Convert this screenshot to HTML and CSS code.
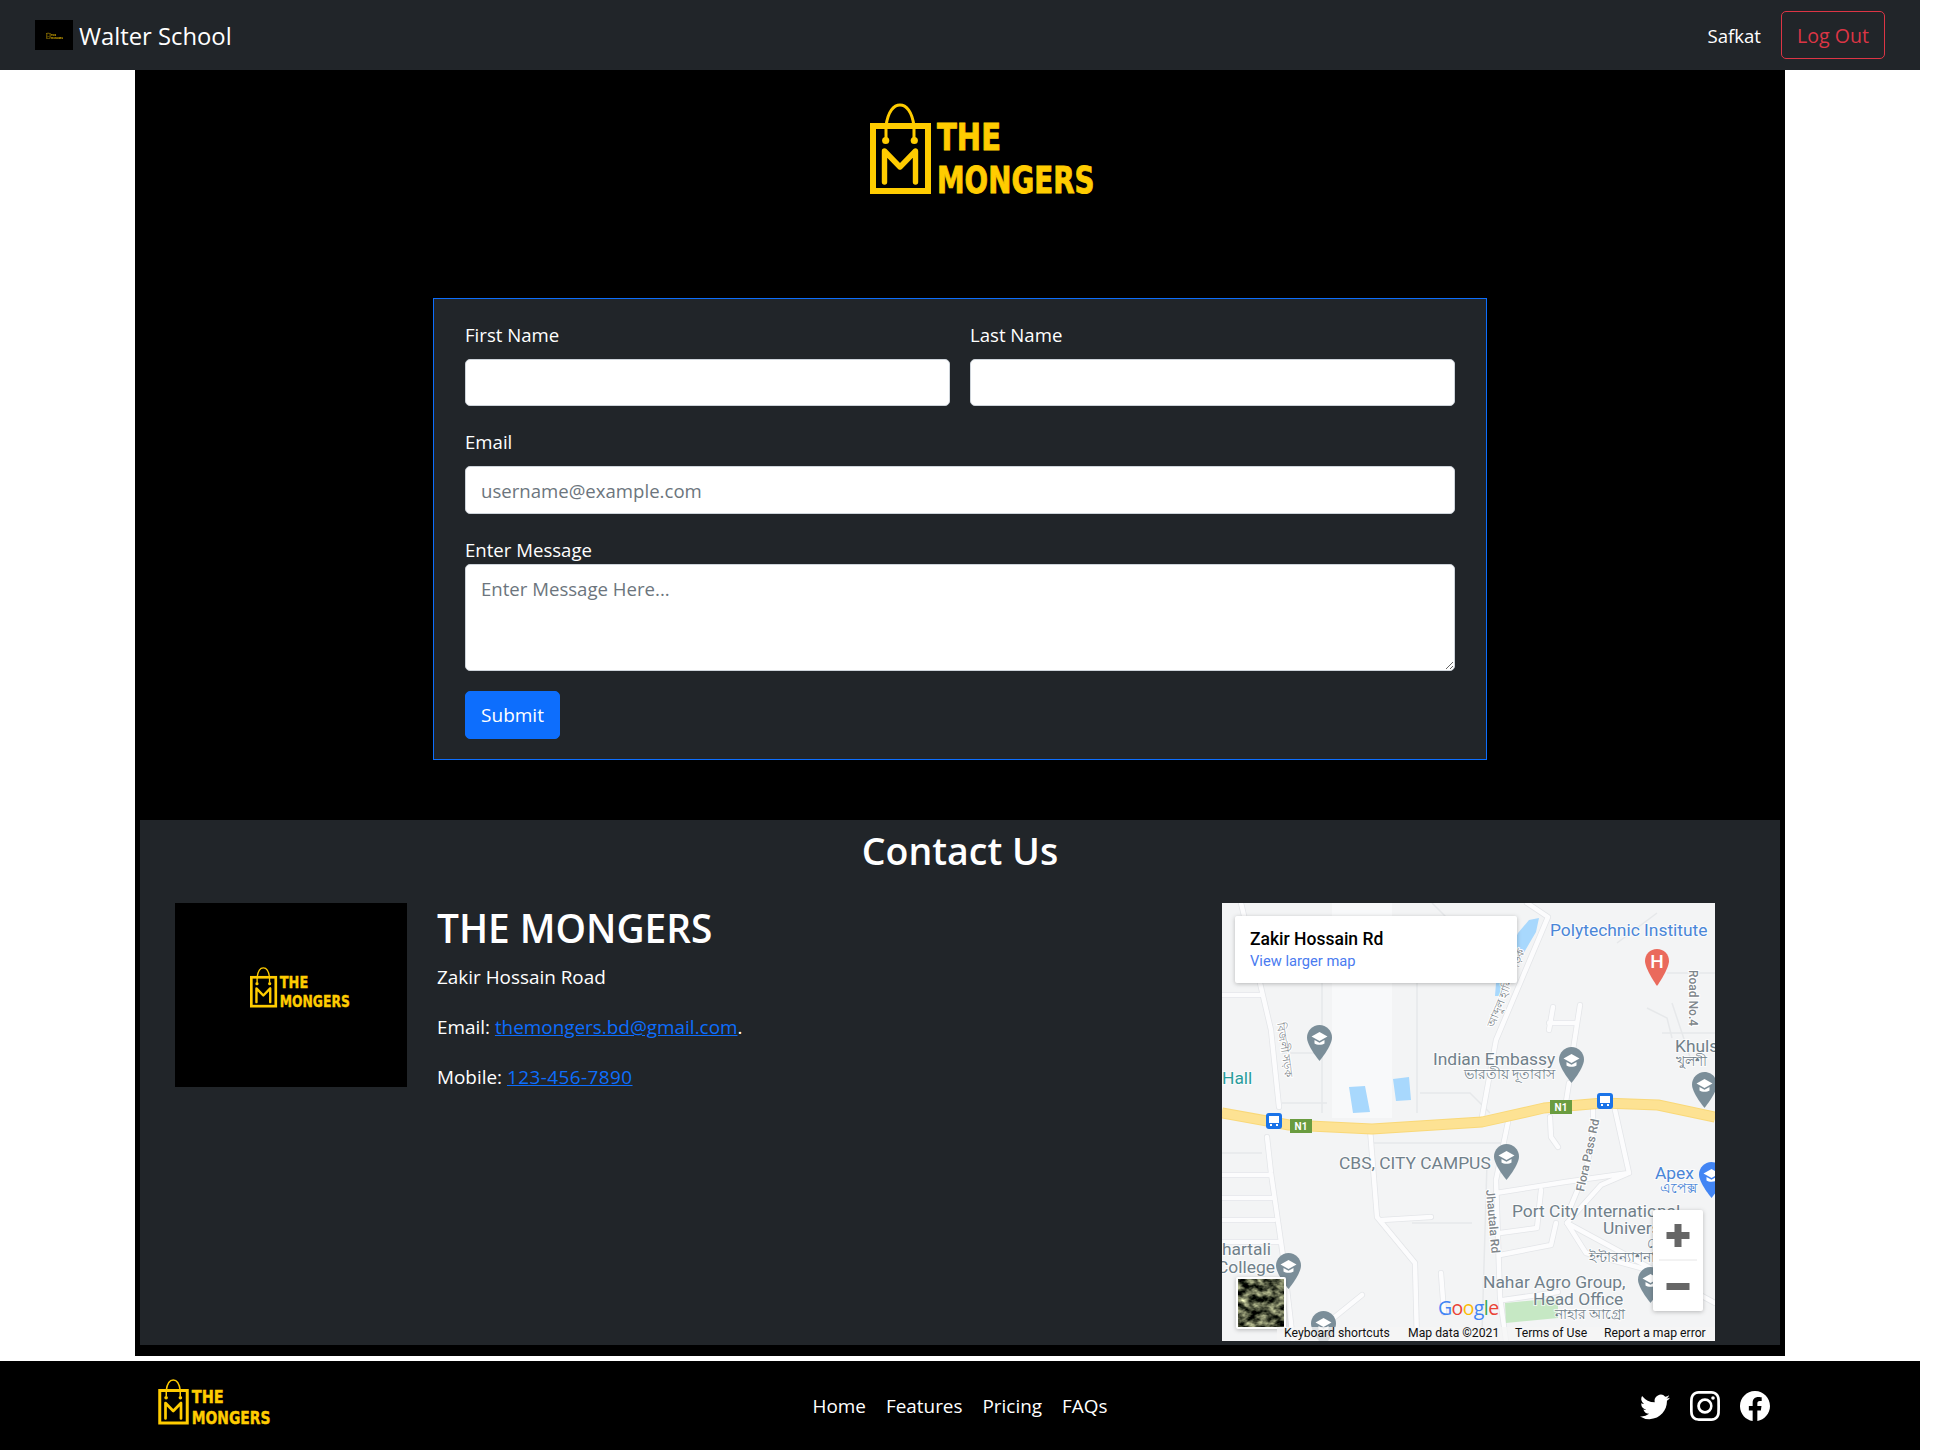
FILE: index.html
```html
<!DOCTYPE html>
<html lang="en">
<head>
<meta charset="utf-8">
<title>Walter School</title>
<link rel="stylesheet" href="styles.css">
</head>
<body>
<svg class="defs" width="0" height="0" aria-hidden="true">
  <defs>
    <filter id="sat" x="0" y="0" width="100%" height="100%" color-interpolation-filters="sRGB">
      <feTurbulence type="fractalNoise" baseFrequency="0.11 0.16" numOctaves="3" seed="7"/>
      <feColorMatrix type="matrix" values="1.5 0 0 0 -.43  1.5 0 0 0 -.41  1.2 0 0 0 -.35  0 0 0 0 1"/>
    </filter>
    <symbol id="logo" viewBox="0 0 225 92">
      <rect class="lg-line" x="3" y="23" width="55" height="65" stroke-width="6"/>
      <path class="lg-line" stroke-width="3" d="M16 23C18 8 24 2 30 2s12 6 14 21M16 23v12M44 23v12"/>
      <circle class="lg-fill" cx="15.7" cy="37.5" r="3.6"/>
      <circle class="lg-fill" cx="44.3" cy="37.5" r="3.6"/>
      <path class="lg-line lg-round" stroke-width="5.4" d="M14.500 79V48L30 64 45.500 48v31"/>
      <text class="lg-text" x="67" y="47" textLength="64" lengthAdjust="spacingAndGlyphs">THE</text>
      <text class="lg-text" x="67" y="90" textLength="157.5" lengthAdjust="spacingAndGlyphs">MONGERS</text>
    </symbol>
    <symbol id="pin" viewBox="0 0 25 36">
      <path d="M12.5 0C5.6 0 0 5.6 0 12.5 0 21 12.5 36 12.5 36S25 21 25 12.5C25 5.6 19.4 0 12.5 0z"/>
      <path class="pin-w" d="M12.5 7 4.5 11.5l8 4.5 8-4.5zM7.5 15v3.500c2 1.700 8 1.700 10 0V15l-5 2.800z"/>
    </symbol>
    <g id="roads">
      <path d="M19 0 38 80 49 127 57 204M45 234 49 270 62 360 71 438"/>
      <path d="M0 272H48M0 295H50M0 317H52M0 339H58M0 92H38"/>
      <path d="M148 226 155 314 193 360 195 438M160 317 209 314"/>
      <path d="M305 0 326 14 274 137 260 214M286 219 274 277 278 394 284 438"/>
      <path d="M274 290 343 279 407 270 393 207M407 270 379 282 345 320 364 350 426 367"/>
      <path d="M278 330 315 325 319 287M278 352 329 342 334 320M281 397 336 389"/>
      <path d="M347 180 343 205M331 104 327 127M358 102 351 147M327 120 353 120M328 214 329 234 336 244"/>
      <path d="M371 207 371 227 365 264 346 310M140 392 109 417M219 370 222 410"/>
      <path d="M345 320 493 400"/>
    </g>
  </defs>
</svg>
<div class="page">
  <nav class="topbar">
    <a class="brand" href="#">
      <span class="brand-img"><svg class="brand-logo"><use href="#logo"/></svg></span>
      <span class="brand-name">Walter School</span>
    </a>
    <div class="user">
      <span class="user-name">Safkat</span>
      <button class="logout" type="button">Log Out</button>
    </div>
  </nav>

  <main class="main">
    <div class="hero"><svg class="hero-logo"><use href="#logo"/></svg></div>

    <form class="card">
      <div class="two">
        <div class="field"><label class="lbl">First Name</label><input class="ctl" type="text"></div>
        <div class="field"><label class="lbl">Last Name</label><input class="ctl" type="text"></div>
      </div>
      <div class="field email-field"><label class="lbl">Email</label><input class="ctl" type="email" placeholder="username@example.com"></div>
      <label class="lbl lbl-tight">Enter Message</label>
      <textarea class="ctl area" placeholder="Enter Message Here..."></textarea>
      <button class="submit" type="button">Submit</button>
    </form>

    <section class="contact">
      <h2 class="contact-title">Contact Us</h2>
      <div class="contact-row">
        <div class="contact-img"><svg class="contact-logo"><use href="#logo"/></svg></div>
        <div class="contact-info">
          <h3 class="info-title">THE MONGERS</h3>
          <p class="info-line">Zakir Hossain Road</p>
          <p class="info-line">Email: <a href="#">themongers.bd@gmail.com</a>.</p>
          <p class="info-line">Mobile: <a class="phone" href="#">123-456-7890</a></p>
        </div>
        <svg class="map" viewBox="0 0 493 438" width="493" height="438">
          <rect class="m-bg" width="493" height="438"/>
          <rect class="m-light" x="110" y="0" width="60" height="215"/>
          <path class="m-minor" d="M0 250H40M150 240h130M60 150h35M60 200h45M195 60v150M100 60v150M198 190h50l20 20M450 100l20 60M425 105l20 10 5 20M445 70h48M440 130h53M395 40l40-30M290 80 210 0M265 260l-5 170M190 320h60"/>
          <use class="m-road-edge" href="#roads"/>
          <use class="m-road" href="#roads"/>
          <path class="m-park" d="M283 400 336 395V415L284 420z"/>
          <path class="m-water" d="M127 184 143 183 148 209 131 210zM171 176 187 174 189 197 174 198zM296 30 307 17 317 15 314 29 284 80 281 93 273 93 274 80z"/>
          <path class="m-hw-edge" d="M0 210 67 222 150 226 260 219 322 205 381 200 436 202 493 214"/>
          <path class="m-hw" d="M0 210 67 222 150 226 260 219 322 205 381 200 436 202 493 214"/>

          <g class="m-shield">
            <rect x="68" y="216" width="22" height="14"/><text class="m-n1" x="79" y="227">N1</text>
            <rect x="328" y="197" width="22" height="14"/><text class="m-n1" x="339" y="208">N1</text>
          </g>
          <g class="m-bus">
            <rect x="44" y="210" width="16" height="16" rx="3"/><path class="m-bus-w" d="M47 213h10v7h-10zM48 221h2v2h-2zM54 221h2v2h-2z"/>
            <rect x="375" y="190" width="16" height="16" rx="3"/><path class="m-bus-w" d="M378 193h10v7h-10zM379 201h2v2h-2zM385 201h2v2h-2z"/>
          </g>

          <use class="pin-grey" href="#pin" x="85" y="122" width="25" height="36"/>
          <use class="pin-grey" href="#pin" x="337" y="144" width="25" height="36"/>
          <use class="pin-grey" href="#pin" x="470" y="169" width="25" height="36"/>
          <use class="pin-grey" href="#pin" x="272" y="241" width="25" height="36"/>
          <use class="pin-grey" href="#pin" x="54" y="350" width="25" height="36"/>
          <use class="pin-grey" href="#pin" x="416" y="364" width="25" height="36"/>
          <use class="pin-grey" href="#pin" x="89" y="408" width="25" height="36"/>
          <use class="pin-blue" href="#pin" x="477" y="259" width="25" height="36"/>
          <path class="pin-red" d="M435 46C428 46 423 51 423 58 423 66 435 83 435 83S447 66 447 58C447 51 442 46 435 46z"/>
          <text class="m-h" x="435" y="65">H</text>

          <text class="m-t m-blue" x="328" y="33">Polytechnic Institute</text>
          <text class="m-t m-teal" x="0" y="181">Hall</text>
          <text class="m-t m-grey" x="211" y="162">Indian Embassy</text>
          <text class="m-t m-grey m-sm" x="333" y="176" text-anchor="end">ভারতীয় দূতাবাস</text>
          <text class="m-t m-grey" x="453" y="149">Khulshi</text>
          <text class="m-t m-grey m-sm" x="454" y="163">খুলশী</text>
          <text class="m-t m-grey" x="117" y="266">CBS, CITY CAMPUS</text>
          <text class="m-t m-blue" x="433" y="276">Apex</text>
          <text class="m-t m-blue m-sm" x="438" y="290">এপেক্স</text>
          <text class="m-t m-grey" x="290" y="314">Port City International</text>
          <text class="m-t m-grey" x="381" y="331">University</text>
          <text class="m-t m-grey m-sm" x="425" y="345">পোর্ট</text>
          <text class="m-t m-grey m-sm" x="367" y="359">ইন্টারন্যাশনাল</text>
          <text class="m-t m-grey" x="261" y="385">Nahar Agro Group,</text>
          <text class="m-t m-grey" x="311" y="402">Head Office</text>
          <text class="m-t m-grey m-sm" x="403" y="416" text-anchor="end">নাহার আগ্রো</text>
          <text class="m-t m-grey" x="0" y="352">hartali</text>
          <text class="m-t m-grey" x="-5" y="370">College</text>
          <text class="m-road-t" transform="translate(467 67) rotate(90)">Road No.4</text>
          <text class="m-road-t" transform="translate(264 287) rotate(85)">Jhautala Rd</text>
          <text class="m-road-t" transform="translate(362 289) rotate(-78)">Flora Pass Rd</text>
          <text class="m-road-t m-road-bn" transform="translate(55 120) rotate(82)">বিজলী সড়ক</text>
          <text class="m-road-t m-road-bn" transform="translate(272 125) rotate(-68)">আব্দুল হালিম সড়ক</text>

          <rect class="m-card" x="13" y="13" width="282" height="67" rx="2"/>
          <text class="m-place" x="28" y="42">Zakir Hossain Rd</text>
          <text class="m-link" x="28" y="63">View larger map</text>

          <rect class="m-card" x="431" y="307" width="50" height="101" rx="2"/>
          <path class="m-ctl" d="M452.500 321h7v8h8v7h-8v8h-7v-8h-8v-7h8zM444.500 380h23v7h-23z"/>
          <path class="m-div" d="M437 357h38"/>

          <rect class="m-card" x="14" y="374" width="50" height="52" rx="2"/>
          <rect class="m-thumb" x="16" y="376" width="46" height="48"/>

          <text class="m-g" x="216" y="412"><tspan class="g-b">G</tspan><tspan class="g-r">o</tspan><tspan class="g-y">o</tspan><tspan class="g-b">g</tspan><tspan class="g-gr">l</tspan><tspan class="g-r">e</tspan></text>

          <rect class="m-strip" x="55" y="424" width="438" height="14"/>
          <text class="m-foot" x="62" y="434">Keyboard shortcuts</text>
          <text class="m-foot" x="186" y="434">Map data ©2021</text>
          <text class="m-foot" x="293" y="434">Terms of Use</text>
          <text class="m-foot" x="382" y="434">Report a map error</text>
        </svg>
      </div>
    </section>
  </main>

  <footer class="foot">
    <svg class="foot-logo"><use href="#logo"/></svg>
    <ul class="foot-nav">
      <li><a href="#">Home</a></li>
      <li><a href="#">Features</a></li>
      <li><a href="#">Pricing</a></li>
      <li><a href="#">FAQs</a></li>
    </ul>
    <div class="social">
      <svg viewBox="0 0 16 16" width="30" height="30"><path d="M5.026 15c6.038 0 9.341-5.003 9.341-9.334 0-.14 0-.282-.006-.422A6.685 6.685 0 0 0 16 3.542a6.658 6.658 0 0 1-1.889.518 3.301 3.301 0 0 0 1.447-1.817 6.533 6.533 0 0 1-2.087.793A3.286 3.286 0 0 0 7.875 6.03a9.325 9.325 0 0 1-6.767-3.429 3.289 3.289 0 0 0 1.018 4.382A3.323 3.323 0 0 1 .64 6.575v.045a3.288 3.288 0 0 0 2.632 3.218 3.203 3.203 0 0 1-.865.115 3.23 3.23 0 0 1-.614-.057 3.283 3.283 0 0 0 3.067 2.277A6.588 6.588 0 0 1 .78 13.58a6.32 6.32 0 0 1-.78-.045A9.344 9.344 0 0 0 5.026 15z"/></svg>
      <svg viewBox="0 0 16 16" width="30" height="30"><path d="M8 0C5.829 0 5.556.01 4.703.048 3.85.088 3.269.222 2.76.42a3.917 3.917 0 0 0-1.417.923A3.927 3.927 0 0 0 .42 2.76C.222 3.268.087 3.85.048 4.7.01 5.555 0 5.827 0 8.001c0 2.172.01 2.444.048 3.297.04.852.174 1.433.372 1.942.205.526.478.972.923 1.417.444.445.89.719 1.416.923.51.198 1.09.333 1.942.372C5.555 15.99 5.827 16 8 16s2.444-.01 3.298-.048c.851-.04 1.434-.174 1.943-.372a3.916 3.916 0 0 0 1.416-.923c.445-.445.718-.891.923-1.417.197-.509.332-1.09.372-1.942C15.99 10.445 16 10.173 16 8s-.01-2.445-.048-3.299c-.04-.851-.175-1.433-.372-1.941a3.926 3.926 0 0 0-.923-1.417A3.911 3.911 0 0 0 13.24.42c-.51-.198-1.092-.333-1.943-.372C10.443.01 10.172 0 7.998 0h.003zm-.717 1.442h.718c2.136 0 2.389.007 3.232.046.78.035 1.204.166 1.486.275.373.145.64.319.92.599.28.28.453.546.598.92.11.281.24.705.275 1.485.039.843.047 1.096.047 3.231s-.008 2.389-.047 3.232c-.035.78-.166 1.203-.275 1.485a2.47 2.47 0 0 1-.599.919c-.28.28-.546.453-.92.598-.28.11-.704.24-1.485.276-.843.038-1.096.047-3.232.047s-2.39-.009-3.233-.047c-.78-.036-1.203-.166-1.485-.276a2.478 2.478 0 0 1-.92-.598 2.48 2.48 0 0 1-.6-.92c-.109-.281-.24-.705-.275-1.485-.038-.843-.046-1.096-.046-3.233 0-2.136.008-2.388.046-3.231.036-.78.166-1.204.276-1.486.145-.373.319-.64.599-.92.28-.28.546-.453.92-.598.282-.11.705-.24 1.485-.276.738-.034 1.024-.044 2.515-.045v.002zm4.988 1.328a.96.96 0 1 0 0 1.92.96.96 0 0 0 0-1.92zm-4.27 1.122a4.109 4.109 0 1 0 0 8.217 4.109 4.109 0 0 0 0-8.217zm0 1.441a2.667 2.667 0 1 1 0 5.334 2.667 2.667 0 0 1 0-5.334z"/></svg>
      <svg viewBox="0 0 16 16" width="30" height="30"><path d="M16 8.049c0-4.446-3.582-8.05-8-8.05C3.58 0-.002 3.603-.002 8.05c0 4.017 2.926 7.347 6.75 7.951v-5.625h-2.03V8.05H6.75V6.275c0-2.017 1.195-3.131 3.022-3.131.876 0 1.791.157 1.791.157v1.98h-1.009c-.993 0-1.303.621-1.303 1.258v1.51h2.218l-.354 2.326H9.25V16c3.824-.604 6.750-3.934 6.750-7.951z"/></svg>
    </div>
  </footer>
</div>
</body>
</html>
```
FILE: styles.css
```css
* { box-sizing: border-box; }
html, body { margin: 0; background: #fff; }
body { font-family: "Open Sans", "Noto Sans", sans-serif; font-size: 18.6px; line-height: 30px; color: #fff; }
.defs { display: block; height: 0; }
.page { width: 1920px; }
a { color: #0d6efd; }
.phone { letter-spacing: .45px; }

/* logo */
.lg-line { fill: none; stroke: #ffcc00; }
.lg-round { stroke-linecap: round; stroke-linejoin: round; }
.lg-fill { fill: #ffcc00; }
.lg-text { fill: #ffcc00; stroke: #ffcc00; stroke-width: .9px; font-family: "DejaVu Sans", sans-serif; font-weight: 700; font-size: 37px; }

/* top bar */
.topbar { height: 70px; background: #212529; display: flex; align-items: center; justify-content: space-between; padding: 0 35px; }
.brand { display: flex; align-items: center; gap: 6px; color: #fff; text-decoration: none; }
.brand-img { width: 38px; height: 30px; background: #000; display: flex; align-items: center; justify-content: center; }
.brand-logo { width: 17px; height: 7px; opacity: .7; }
.brand-name { font-size: 23.8px; padding-top: 2px; }
.user { display: flex; align-items: center; gap: 20px; }
.user-name { padding-top: 2px; }
.logout { width: 104px; height: 48px; border: 1px solid #dc3545; border-radius: 5px; background: transparent; color: #dc3545; font: inherit; font-size: 19.6px; padding: 2px 0 0; }

/* main */
.main { width: 1650px; margin: 0 auto; background: #000; padding-bottom: 11px; }
.hero { height: 228px; padding: 33px 0 0 735px; }
.hero-logo { display: block; width: 225px; height: 92px; }

.card { width: 1054px; height: 462px; margin: 0 auto; background: #212529; border: 1px solid #0d6efd; padding: 20px 31px; display: flex; flex-direction: column; }
.two { display: grid; grid-template-columns: 485px 485px; gap: 20px; }
.field { display: flex; flex-direction: column; }
.email-field { margin-top: 20px; }
.lbl { display: block; height: 30px; margin-bottom: 10px; padding-top: 1px; }
.lbl-tight { margin: 21px 0 -1px; padding-top: 0; }
.ctl { display: block; width: 100%; height: 47px; border: 1px solid #ced4da; border-radius: 5px; background: #fff; padding: 7px 15px; font: inherit; color: #212529; }
.ctl::placeholder { color: #6c757d; opacity: 1; }
.email-field .ctl { height: 48px; }
.area { height: 107px; padding-top: 9px; resize: vertical; flex: none; }
.submit { align-self: flex-start; width: 95px; height: 48px; margin-top: 20px; background: #0d6efd; border: 1px solid #0d6efd; border-radius: 5px; color: #fff; font: inherit; font-size: 19px; padding: 0; }

/* contact */
.contact { margin: 60px 5px 0; height: 525px; background: #212529; padding: 0 35px; }
.contact-title { margin: 0; height: 83px; padding-top: 6px; text-align: center; font-size: 37.5px; font-weight: 600; line-height: 50px; }
.contact-row { display: flex; align-items: flex-start; }
.contact-img { width: 232px; height: 184px; background: #000; padding: 64px 0 0 75px; flex: none; }
.contact-logo { display: block; width: 100px; height: 41px; }
.contact-info { width: 815px; padding-left: 30px; flex: none; font-size: 18.9px; }
.info-title { margin: 0; height: 59px; padding-top: 1px; font-size: 38.8px; font-weight: 600; line-height: 48px; }
.info-line { margin: 0 0 20px; }
.map { display: block; flex: none; }

/* map pieces */
.m-bg { fill: #f3f4f5; }
.m-light { fill: #f8f9fa; }
.m-minor { fill: none; stroke: #e6e8ea; stroke-width: 1.5; }
.m-road, .m-road-edge { fill: none; stroke-linecap: round; stroke-linejoin: round; }
.m-road { stroke: #fcfcfd; stroke-width: 4.5; }
.m-road-edge { stroke: #e3e5e8; stroke-width: 6; }
.m-park { fill: #c6e8c4; }
.m-water { fill: #a8d8fd; }
.m-hw, .m-hw-edge { fill: none; stroke-linejoin: round; }
.m-hw { stroke: #fde293; stroke-width: 9; }
.m-hw-edge { stroke: #f9d878; stroke-width: 11; }
.m-shield rect { fill: #6a9c3f; }
.m-n1 { fill: #fff; font: 700 10px Roboto, sans-serif; text-anchor: middle; }
.m-bus rect { fill: #1a73e8; }
.m-bus-w { fill: #fff; }
.pin-grey { fill: #7b8e99; }
.pin-blue { fill: #4285f4; }
.pin-red { fill: #ea6a5c; }
.pin-w { fill: #fff; }
.m-h { fill: #fff; font: 500 19px Roboto, sans-serif; text-anchor: middle; }
.m-t { font-family: Roboto, "Noto Sans", sans-serif; font-size: 17.4px; paint-order: stroke; stroke: rgba(255,255,255,.7); stroke-width: 2px; }
.m-sm { font-size: 13.5px; }
.m-grey { fill: #70808a; }
.m-blue { fill: #4a86d8; }
.m-teal { fill: #2a9d9d; }
.m-road-t { font: 500 12px Roboto, "Noto Sans", sans-serif; fill: #80868b; paint-order: stroke; stroke: #fff; stroke-width: 2px; }
.m-road-bn { font-size: 11px; }
.m-card { fill: #fff; filter: drop-shadow(0 1px 2px rgba(0,0,0,.25)); }
.m-place { font: 500 17.5px Roboto, sans-serif; fill: #000; }
.m-link { font: 400 14.7px Roboto, sans-serif; fill: #4a7bf0; }
.m-ctl { fill: #666; }
.m-div { stroke: #e6e6e6; stroke-width: 1; fill: none; }
.m-thumb { filter: url(#sat); }
.m-g { font: 500 19.5px "Open Sans", Roboto, sans-serif; letter-spacing: -.6px; }
.g-b { fill: #4285f4; }
.g-r { fill: #ea4335; }
.g-y { fill: #fbbc05; }
.g-gr { fill: #34a853; }
.m-strip { fill: rgba(245,245,245,.8); }
.m-foot { font: 400 12.2px Roboto, sans-serif; fill: #111; }

/* footer */
.foot { height: 89px; margin-top: 5px; background: #000; display: grid; grid-template-columns: 1fr auto 1fr; align-items: center; padding: 0 150px; font-size: 18.9px; }
.foot-logo { display: block; width: 113px; height: 46px; margin: -8px 0 0 8px; }
.foot-nav { list-style: none; margin: 0; padding: 0; display: flex; gap: 20px; }
.foot-nav a { color: #fff; text-decoration: none; }
.social { display: flex; justify-content: flex-end; gap: 20px; }
.social svg { display: block; fill: #fff; }
```
